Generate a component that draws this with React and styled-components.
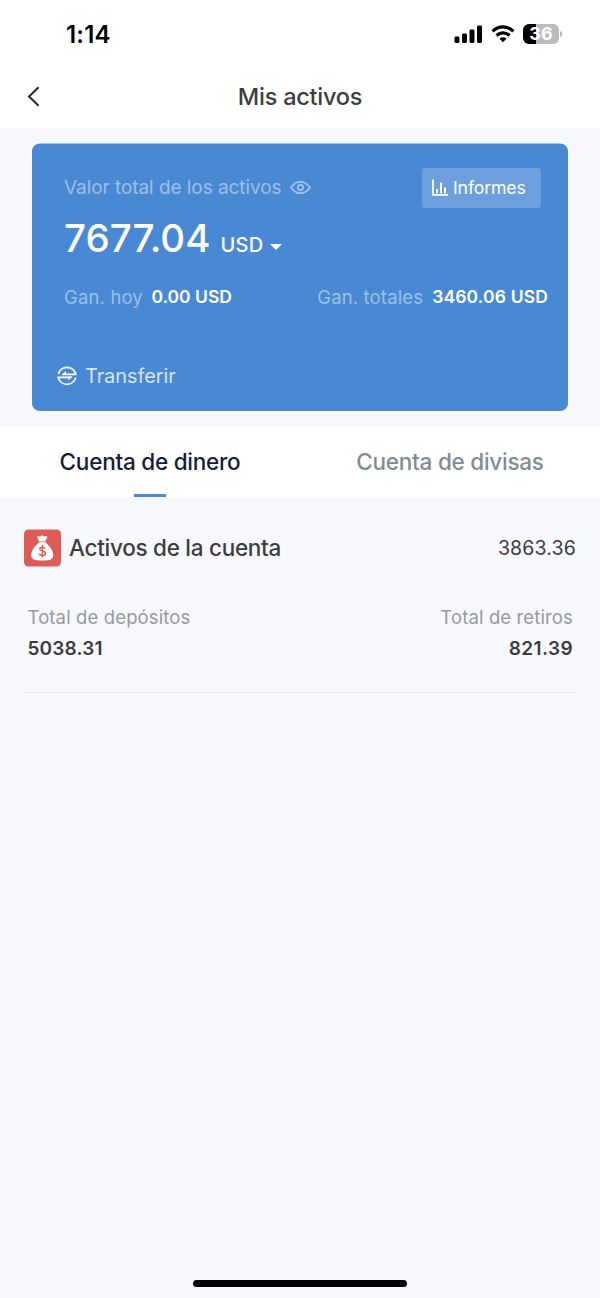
import React from "react";
import styled, { createGlobalStyle } from "styled-components";

const GlobalStyle = createGlobalStyle`
  * { box-sizing: border-box; }
  body {
    margin: 0;
    background: #f7f8fc;
    font-family: Inter, "Liberation Sans", sans-serif;
    color: #3d3d3f;
  }
`;

const Screen = styled.div`
  display: flex;
  flex-direction: column;
  width: 600px;
  height: 1298px;
  overflow: hidden;
`;

const Text = styled.span`
  display: block;
  white-space: nowrap;
  font-size: ${(p) => p.$size}px;
  line-height: ${(p) => p.$line || 24}px;
  font-weight: ${(p) => p.$weight || 400};
  letter-spacing: ${(p) => p.$spacing || 0}px;
  color: ${(p) => p.$color || "inherit"};
`;

const StatusBar = styled.div`
  display: flex;
  align-items: center;
  justify-content: space-between;
  height: 66px;
  padding: 2px 38px 0 66px;
  background: #fff;
  color: #000;
`;

const Clock = styled(Text)`
  padding-top: 2px;
`;

const StatusIcons = styled.div`
  display: flex;
  align-items: center;
  gap: 8px;
`;

const Battery = styled.div`
  display: flex;
  align-items: center;
  gap: 1px;
`;

const BatteryBody = styled.div`
  display: flex;
  align-items: center;
  justify-content: center;
  width: 36px;
  height: 20px;
  border-radius: 6px;
  background: linear-gradient(to right, #000 36%, #bcbcbc 36%);
  color: #fff;
`;

const BatteryTip = styled.div`
  width: 2px;
  height: 6px;
  border-radius: 0 2px 2px 0;
  background: #bcbcbc;
`;

const NavBar = styled.header`
  display: grid;
  grid-template-columns: 60px 1fr 60px;
  align-items: center;
  justify-items: center;
  height: 62px;
  background: #fff;
`;

const BackButton = styled.div`
  justify-self: start;
  display: flex;
  padding-left: 26px;
`;

const Card = styled.section`
  display: flex;
  flex-direction: column;
  height: 267px;
  margin: 16px 32px 16px;
  border-radius: 8px;
  background: #4989d3;
  box-shadow: 0 -0.5px 0 #4989d3;
  color: #fff;
`;

const CardTop = styled.div`
  display: flex;
  align-items: flex-start;
  justify-content: space-between;
  height: 64px;
  padding: 24px 27px 0 32px;
`;

const Row = styled.div`
  display: flex;
  align-items: center;
  gap: ${(p) => p.$gap || 0}px;
`;

const CardLabel = styled(Row)`
  padding-top: 8px;
`;

const ReportButton = styled.div`
  display: flex;
  align-items: center;
  gap: 5px;
  width: 119px;
  height: 40px;
  padding-left: 10px;
  border-radius: 3px;
  background: #6d9fdc;
`;

const Balance = styled.div`
  display: flex;
  align-items: baseline;
  height: 60px;
  padding: 5px 0 0 32px;
`;

const Currency = styled(Row)`
  margin-left: 10px;
`;

const Caret = styled.i`
  margin-top: 3px;
  border: 6px solid transparent;
  border-top-color: #fff;
  border-bottom: 0;
`;

const Gains = styled.div`
  display: flex;
  align-items: flex-start;
  justify-content: space-between;
  height: 73px;
  margin: 0 20px 0 32px;
  padding-top: 17px;
`;

const CardDivider = styled.div`
  height: 1px;
  margin: 0 32px;
  background: #4f8ed6;
`;

const Transfer = styled.div`
  display: flex;
  align-items: center;
  gap: 8px;
  height: 67px;
  padding-left: 25px;
`;

const Tabs = styled.nav`
  display: grid;
  grid-template-columns: 1fr 1fr;
  height: 70px;
  background: #fff;
`;

const Tab = styled.div`
  display: flex;
  flex-direction: column;
  align-items: center;
  justify-content: space-between;
  padding-top: 23px;
`;

const TabMark = styled.div`
  width: 32px;
  height: 3px;
  background: #4989d8;
`;

const Account = styled.main`
  height: 196px;
  margin: 0 24px;
  padding-top: 32px;
  border-bottom: 1px solid #eaebef;
`;

const AccountHead = styled.div`
  display: flex;
  align-items: center;
  justify-content: space-between;
  height: 38px;
`;

const Totals = styled.div`
  display: flex;
  justify-content: space-between;
  padding: 38px 3px 0 3.5px;
`;

const Total = styled.div`
  display: flex;
  flex-direction: column;
  gap: 8px;
  text-align: ${(p) => p.$align};
`;

const HomeIndicator = styled.div`
  width: 214px;
  height: 7px;
  margin: auto auto 11.5px;
  border-radius: 4px;
  background: #000;
`;

const SignalIcon = () => (
  <svg width="29" height="20" viewBox="0 0 29 20">
    <rect x="0.5" y="12.5" width="5" height="6.5" rx="1.4" />
    <rect x="8" y="9.5" width="5" height="9.5" rx="1.4" />
    <rect x="15.5" y="5.5" width="5" height="13.5" rx="1.4" />
    <rect x="23" y="1.5" width="5" height="17.5" rx="1.4" />
  </svg>
);

const WifiIcon = () => (
  <svg width="24" height="20" viewBox="0 0 24 20" fill="none" stroke="#000" strokeWidth="3.2">
    <path d="M1.6 7.4C7.4 1.4 16.6 1.4 22.4 7.4" />
    <path d="M5.5 11.5C9.2 7.9 14.8 7.9 18.5 11.5" />
    <path d="M8.5 14.7C10.5 12.9 13.5 12.9 15.5 14.7L12 18.3Z" fill="#000" stroke="none" />
  </svg>
);

const BackIcon = () => (
  <svg width="16" height="22" viewBox="0 0 16 22" fill="none" stroke="#222" strokeWidth="1.9">
    <path d="M12.6 1.2L3 10.5L12.6 19.8" />
  </svg>
);

const EyeIcon = () => (
  <svg width="21" height="14" viewBox="0 0 21 14" fill="none" stroke="#a4c4e9" strokeWidth="1.7">
    <path d="M1 6.5C6 -1 15 -1 20 6.5C15 14 6 14 1 6.5Z" />
    <circle cx="10.5" cy="6.5" r="2.6" />
  </svg>
);

const ChartIcon = () => (
  <svg width="16" height="18" viewBox="0 0 16 18" fill="none" stroke="#fff" strokeWidth="1.7">
    <path d="M1 0.5V15.9H16" />
    <path d="M5 10V14.2M9 3.5V14.2M13 8.5V14.2" strokeWidth="2" />
  </svg>
);

const TransferIcon = () => (
  <svg width="20" height="20" viewBox="0 0 20 20" fill="none" stroke="#fff" strokeWidth="1.7">
    <path d="M1.3 8A9 9 0 0 1 18.7 8" />
    <path d="M18.7 11.6A9 9 0 0 1 1.3 11.6" />
    <path d="M5.5 8.3H19.6M14.5 11.3H0.4" />
    <path d="M4.6 9.1L9 5V9.1ZM15.4 10.5L11 14.6V10.5Z" fill="#fff" stroke="none" />
  </svg>
);

const MoneyBagIcon = () => (
  <svg width="37" height="38" viewBox="0 0 37 38">
    <rect y="0.5" width="37" height="37" rx="4.5" fill="#de5c57" />
    <path
      d="M13 7.6Q14.5 6.8 16 7.5L18 6.3L20.5 7.5Q22 6.8 23.5 7.5L21.4 12.4H15.2ZM15 13.2H21.6C25.5 17 29.5 21.6 29.3 26.3C29.1 30.3 26.2 31.6 18.2 31.6C10.2 31.6 7.4 30.3 7.2 26.3C7 21.6 11.1 17 15 13.2Z"
      fill="#fff"
    />
    <path
      d="M21 19.6C20.4 17.9 15.8 17.6 15.8 20.1C15.8 22.7 21.4 21.3 21.4 24.4C21.4 27.2 16 27 15.3 24.8M18.4 15.9V28.4"
      fill="none"
      stroke="#de5c57"
      strokeWidth="1.5"
    />
  </svg>
);

export default function App() {
  return (
    <Screen>
      <GlobalStyle />
      <StatusBar>
        <Clock $size={24} $weight={600} $spacing={0.2}>1:14</Clock>
        <StatusIcons>
          <SignalIcon />
          <WifiIcon />
          <Battery>
            <BatteryBody>
              <Text $size={18} $line={20} $weight={700}>36</Text>
            </BatteryBody>
            <BatteryTip />
          </Battery>
        </StatusIcons>
      </StatusBar>
      <NavBar>
        <BackButton><BackIcon /></BackButton>
        <Text $size={23.5} $line={30} $weight={550} $spacing={-0.25}>Mis activos</Text>
      </NavBar>

      <Card>
        <CardTop>
          <CardLabel $gap={8}>
            <Text $size={19} $color="#9dbfe8" $spacing={-0.06}>Valor total de los activos</Text>
            <EyeIcon />
          </CardLabel>
          <ReportButton>
            <ChartIcon />
            <Text $size={17.7} $spacing={-0.15}>Informes</Text>
          </ReportButton>
        </CardTop>
        <Balance>
          <Text $size={38.5} $line={50} $weight={550} $spacing={0.02}>7677.04</Text>
          <Currency $gap={6}>
            <Text $size={20} $weight={500} $spacing={0.3}>USD</Text>
            <Caret />
          </Currency>
        </Balance>
        <Gains>
          <Row $gap={8.5}>
            <Text $size={18.5} $color="#9dbfe8" $spacing={0.15}>Gan. hoy</Text>
            <Text $size={17.5} $weight={600}>0.00 USD</Text>
          </Row>
          <Row $gap={9}>
            <Text $size={18.5} $color="#9dbfe8" $spacing={0.15}>Gan. totales</Text>
            <Text $size={17.5} $weight={600} $spacing={0.15}>3460.06 USD</Text>
          </Row>
        </Gains>
        <CardDivider />
        <Transfer>
          <TransferIcon />
          <Text $size={20} $color="#d6e4f6" $spacing={-0.1}>Transferir</Text>
        </Transfer>
      </Card>

      <Tabs>
        <Tab>
          <Text $size={22.5} $weight={550} $spacing={-0.24} $color="#131c3d">Cuenta de dinero</Text>
          <TabMark />
        </Tab>
        <Tab>
          <Text $size={22.5} $weight={550} $spacing={-0.25} $color="#7f8c96">Cuenta de divisas</Text>
        </Tab>
      </Tabs>

      <Account>
        <AccountHead>
          <Row $gap={8}>
            <MoneyBagIcon />
            <Text $size={22.5} $weight={550} $spacing={-0.28}>Activos de la cuenta</Text>
          </Row>
          <Text $size={19.5} $spacing={0.15}>3863.36</Text>
        </AccountHead>
        <Totals>
          <Total $align="left">
            <Text $size={18.5} $spacing={0.13} $color="#98999d">Total de depósitos</Text>
            <Text $size={19} $weight={600} $spacing={0.15}>5038.31</Text>
          </Total>
          <Total $align="right">
            <Text $size={18.5} $spacing={0.13} $color="#98999d">Total de retiros</Text>
            <Text $size={19} $weight={600} $spacing={0.4}>821.39</Text>
          </Total>
        </Totals>
      </Account>
      <HomeIndicator />
    </Screen>
  );
}
